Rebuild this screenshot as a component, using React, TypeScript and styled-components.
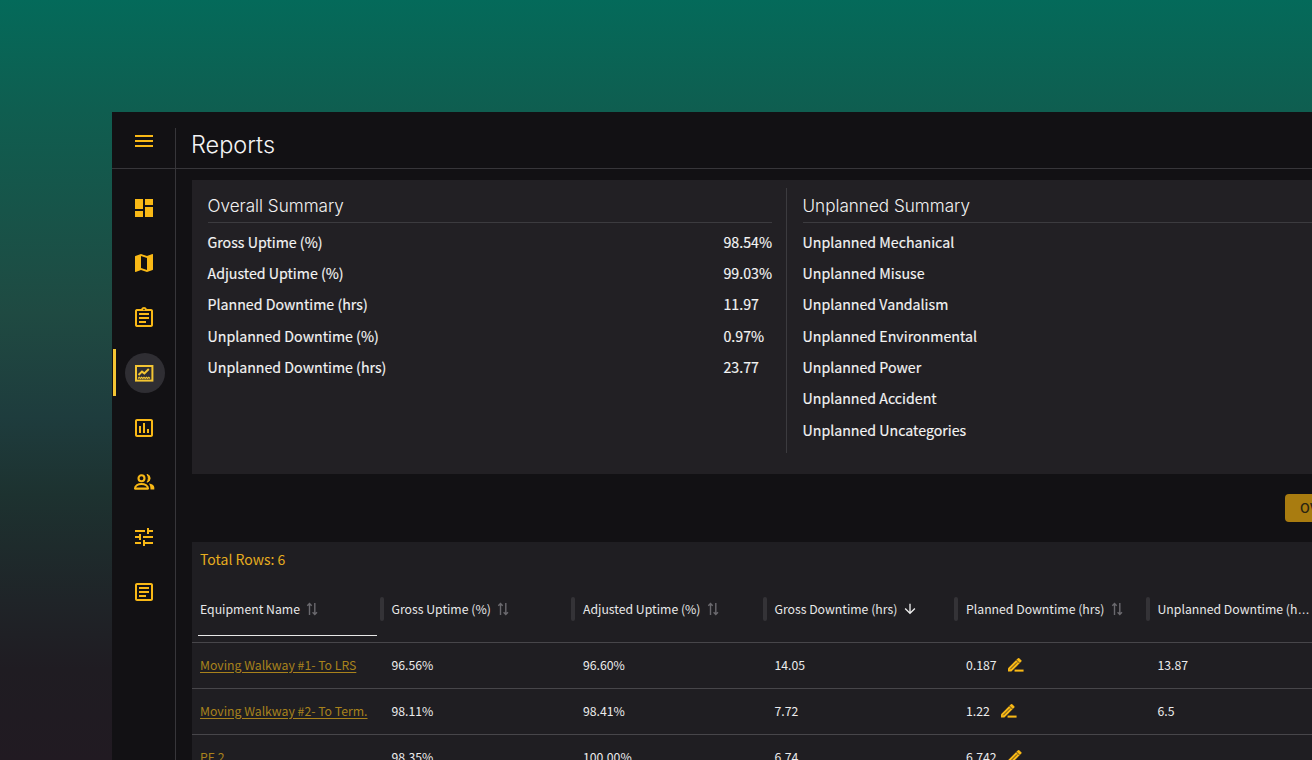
import React from "react";
import styled, { createGlobalStyle } from "styled-components";
import {
  MdDashboard, MdMap, MdOutlineAssignment, MdOutlineAssessment,
  MdOutlineTune, MdOutlineArticle, MdArrowDownward,
} from "react-icons/md";

const Global = createGlobalStyle`
  html, body { margin: 0; padding: 0; height: 760px; overflow: hidden; }
  * { box-sizing: border-box; }
  #root { height: 760px; }
`;
const body = `"Noto Sans CJK KR", "Noto Sans", sans-serif`;
const title = `"Inter", "Lato", sans-serif`;
const gold = "#f9b916";

const Page = styled.div`
  width: 1312px; height: 760px; overflow: hidden; padding: 112px 0 0 112px;
  background: linear-gradient(180deg, #046a5a 0%, #0f5e50 14.5%, #1f4a42 41%, #1e3c3d 55%, #1d3230 65%, #1f2428 79%, #1f1c22 88%, #211a22 100%);
  font-family: ${body};
`;
const Window = styled.div`
  width: 1400px; height: 648px; background: #121114; display: flex; flex-direction: column; color: #fff;
`;
const TopBar = styled.header`
  height: 57px; flex: none; display: flex; border-bottom: 1px solid #37363a; padding-top: 16px;
`;
const MenuCell = styled.div`
  width: 64px; height: 40px; display: flex; justify-content: center; align-items: flex-start;
  color: ${gold}; border-right: 1px solid #37363a;
`;
const MenuBars = styled.div`
  width: 18px; height: 12px; margin-top: 7px; display: flex; flex-direction: column; justify-content: space-between;
  span { display: block; height: 2px; background: ${gold}; }
`;
const Title = styled.h1`
  margin: 0 0 0 15px; font: 300 23.5px/33px ${title}; color: #f4f4f4;
`;
const Body = styled.div` flex: 1; display: flex; min-height: 0; `;
const Rail = styled.nav`
  width: 64px; flex: none; border-right: 1px solid #37363a; padding: 12px 0 0 1px;
  display: flex; flex-direction: column;
`;
const RailItem = styled.div<{ $active?: boolean }>`
  height: 54.8px; flex: none; position: relative; display: flex; align-items: center; justify-content: center;
  color: ${gold}; font-size: 24px;
  ${p => p.$active ? `
    &::before { content: ""; position: absolute; left: 0; top: 4px; width: 3px; height: 47px; background: #f3c533; }
    &::after { content: ""; position: absolute; left: 12px; top: 8px; width: 40px; height: 40px; border-radius: 50%; background: #2f2e33; }
    svg { position: relative; z-index: 1; color: #f3c533; }
  ` : ""}
`;
const Main = styled.main` flex: 1; padding: 11px 0 0 16px; min-width: 0; display: flex; flex-direction: column; `;
const Summary = styled.section`
  height: 294px; flex: none; background: #222024; padding: 8px 15.5px; display: grid; grid-template-columns: 564px 1fr;
`;
const SumCol = styled.div<{ $right?: boolean }>`
  ${p => p.$right ? `border-left: 1px solid #3c3b3f; margin-left: 14px; padding-left: 16px; margin-bottom: 13px;` : ""}
`;
const SumTitle = styled.h2`
  margin: 0; height: 35px; font: 300 17.1px/35px ${title}; color: #f2f2f2; border-bottom: 1px solid #3c3b3f;
`;
const SumList = styled.div` padding-top: 3.4px; `;
const SumRow = styled.div`
  height: 31.35px; display: grid; grid-template-columns: 516px 1fr; align-items: center;
  font: 400 14.2px/31px ${body}; color: #f4f4f4; -webkit-text-stroke: .15px #f4f4f4;
`;
const Actions = styled.div` height: 68px; flex: none; display: flex; justify-content: flex-start; align-items: center; padding-left: 1093px; `;
const Overview = styled.button`
  width: 120px; height: 28px; background: #a97c10; border: 0; border-radius: 4px; text-align: left; padding: 0 15px;
  font: 500 13px/28px ${body}; color: #2a2412; letter-spacing: .3px;
`;
const TablePanel = styled.section` background: #1f1e22; flex: 1; min-height: 0; overflow: hidden; `;
const TotalRows = styled.div` height: 40px; padding: 7px 8px 0; font: 400 14px/20px ${body}; color: #e6ad1f; `;
const Head = styled.div`
  display: grid; grid-template-columns: repeat(6, 191.5px); height: 61px; border-bottom: 1px solid #47464a;
`;
const HeadCell = styled.div<{ $first?: boolean }>`
  position: relative; padding: 0 8px 2px; display: flex; align-items: center;
  font: 400 12.25px/20px ${body}; color: #e8e8e8; white-space: nowrap;
  height: 56px;
  ${p => p.$first ? `&::after { content: ""; position: absolute; left: 6px; bottom: 2px; width: 179px; height: 1px; background: #e8e8e8; }` : ""}
`;
const Separator = styled.span`
  position: absolute; left: -4px; top: 15px; width: 4px; height: 24px; background: #343337; border-radius: 2px;
`;
const SortIcon = styled.svg`
  flex: none; width: 12px; height: 14px; margin-left: 6.5px; color: #6a696e;
`;
const ActiveSort = styled.span`
  display: inline-flex; margin-left: 5px; font-size: 16px; color: #eee;
`;
const Truncated = styled.span` white-space: nowrap; `;
const Dots = styled.span` font-family: "Liberation Sans", sans-serif; `;
const Row = styled.div`
  display: grid; grid-template-columns: repeat(6, 191.5px); height: 46px; border-bottom: 1px solid #47464a;
  align-items: center;
`;
const Cell = styled.div`
  padding: 0 8px 2px; font: 400 12.25px/20px ${body}; color: #ececec; display: flex; align-items: center; white-space: nowrap;
`;
const Link = styled.a`
  color: #a8821c; text-decoration: underline; text-underline-offset: 2px;
`;
const Edit = styled.svg` flex: none; width: 17px; height: 15px; margin-left: 10px; color: ${gold}; `;

const Insight = () => (
  <svg width="24" height="24" viewBox="0 0 24 24" fill="none" stroke="currentColor">
    <rect x="4" y="5" width="16.4" height="14.6" strokeWidth="2" />
    <path d="M6.5 14l3.5-3.4 2.4 1.8 4.4-4.4" strokeWidth="2" />
    <path d="M6 17.5l1.2-1.2 1.2 1.2 1.2-1.2 1.2 1.2 1.2-1.2 1.2 1.2 1.2-1.2 1.2 1.2 1.2-1.2 1.2 1.2" strokeWidth="1.2" />
  </svg>
);
const People = () => (
  <svg width="24" height="24" viewBox="0 0 24 24" fill="none" stroke="currentColor">
    <circle cx="9.5" cy="8.3" r="3" strokeWidth="2.1" />
    <path d="M15 4.4a4 4 0 0 1 0 7.8c1.8-2.2 1.8-5.6 0-7.8z" fill="currentColor" strokeWidth="1" />
    <path d="M3 18.6c0-3 3.4-4.6 6.5-4.6s6.5 1.6 6.5 4.6z" strokeWidth="2.1" strokeLinejoin="round" />
    <path d="M17 13.4c3 .4 5.3 1.7 5.3 4.2v2h-3.8c0-2.5-.4-4.4-1.5-6.2z" fill="currentColor" stroke="none" />
  </svg>
);
const SortGlyph = () => (
  <SortIcon viewBox="0 0 12 14" fill="none" stroke="currentColor" strokeWidth="1.4">
    <path d="M3.5 13V1.5M1.3 3.7l2.2-2.2 2.2 2.2" />
    <path d="M8.8 1v11.5M6.6 10.3l2.2 2.2 2.2-2.2" />
  </SortIcon>
);
const EditGlyph = () => (
  <Edit viewBox="0 0 18 16">
    <path fill="currentColor" d="M1 15.5v-3.6L11.6 1.3a1 1 0 0 1 1.4 0l2.2 2.2a1 1 0 0 1 0 1.4L4.6 15.5z" />
    <path fill="none" stroke="#1f1e22" strokeWidth=".8" d="M3.4 13.1l7.4-7.4M10 3.2l3.3 3.3" />
    <rect x="8" y="13.4" width="9.6" height="2.2" fill="currentColor" />
  </Edit>
);

const headers = ["Equipment Name", "Gross Uptime (%)", "Adjusted Uptime (%)", "Gross Downtime (hrs)", "Planned Downtime (hrs)", "Unplanned Downtime (h"];
const rows = [
  ["Moving Walkway #1- To LRS", "96.56%", "96.60%", "14.05", "0.187", "13.87"],
  ["Moving Walkway #2- To Term.", "98.11%", "98.41%", "7.72", "1.22", "6.5"],
  ["PE 2", "98.35%", "100.00%", "6.74", "6.742", ""],
];
const overall = [
  ["Gross Uptime (%)", "98.54%"], ["Adjusted Uptime (%)", "99.03%"], ["Planned Downtime (hrs)", "11.97"],
  ["Unplanned Downtime (%)", "0.97%"], ["Unplanned Downtime (hrs)", "23.77"],
];
const unplanned = ["Unplanned Mechanical", "Unplanned Misuse", "Unplanned Vandalism", "Unplanned Environmental", "Unplanned Power", "Unplanned Accident", "Unplanned Uncategories"];

export default function App() {
  return (
    <Page>
      <Global />
      <Window>
        <TopBar>
          <MenuCell><MenuBars><span /><span /><span /></MenuBars></MenuCell>
          <Title>Reports</Title>
        </TopBar>
        <Body>
          <Rail>
            <RailItem><MdDashboard /></RailItem>
            <RailItem><MdMap /></RailItem>
            <RailItem><MdOutlineAssignment /></RailItem>
            <RailItem $active><Insight /></RailItem>
            <RailItem><MdOutlineAssessment /></RailItem>
            <RailItem><People /></RailItem>
            <RailItem><MdOutlineTune /></RailItem>
            <RailItem><MdOutlineArticle /></RailItem>
          </Rail>
          <Main>
            <Summary>
              <SumCol>
                <SumTitle>Overall Summary</SumTitle>
                <SumList>
                  {overall.map(([k, v]) => <SumRow key={k}><span>{k}</span><span>{v}</span></SumRow>)}
                </SumList>
              </SumCol>
              <SumCol $right>
                <SumTitle>Unplanned Summary</SumTitle>
                <SumList>
                  {unplanned.map(k => <SumRow key={k}><span>{k}</span></SumRow>)}
                </SumList>
              </SumCol>
            </Summary>
            <Actions><Overview>OVERVIEW</Overview></Actions>
            <TablePanel>
              <TotalRows>Total Rows: 6</TotalRows>
              <Head>
                {headers.map((h, i) => (
                  <HeadCell key={h} $first={i === 0}>
                    {i > 0 && <Separator />}
                    {i === 5 ? <Truncated>{h}<Dots>…</Dots></Truncated> : h}
                    {i === 3 ? <ActiveSort><MdArrowDownward /></ActiveSort> : i < 5 ? <SortGlyph /> : null}
                  </HeadCell>
                ))}
              </Head>
              {rows.map(r => (
                <Row key={r[0]}>
                  {r.map((c, i) => (
                    <Cell key={i}>
                      {i === 0 ? <Link>{c}</Link> : c}
                      {i === 4 && <EditGlyph />}
                    </Cell>
                  ))}
                </Row>
              ))}
            </TablePanel>
          </Main>
        </Body>
      </Window>
    </Page>
  );
}
